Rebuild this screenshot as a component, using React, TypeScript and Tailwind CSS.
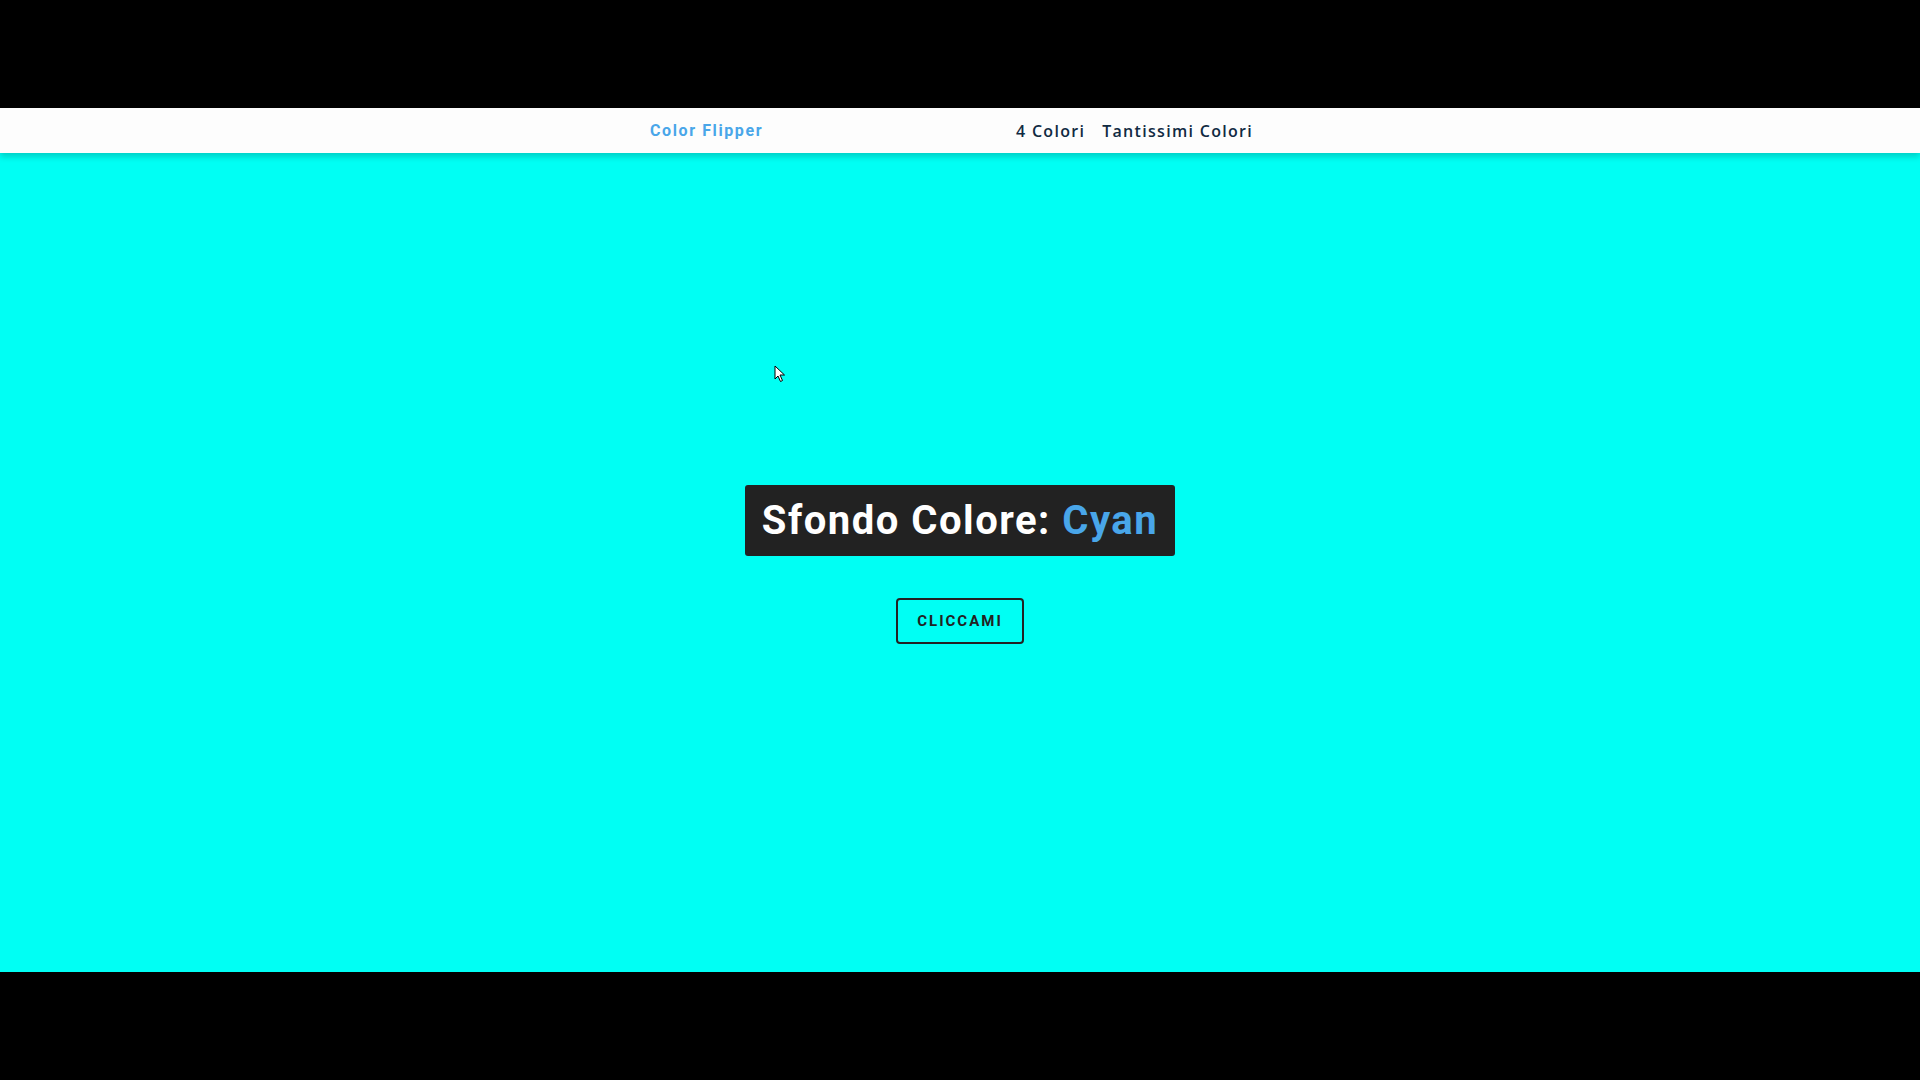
import React from 'react';

const FONT = { fontFamily: 'Roboto, "Liberation Sans", sans-serif' };

function Cursor() {
  return (
    <svg
      className="absolute left-[774px] top-[257px]"
      width="12"
      height="18"
      viewBox="0 0 12 18"
    >
      <path d="M1 1 L1 14 L4 11 L6.5 16.5 L8.5 15.5 L6 10 L10.5 10 Z" fill="#fff" stroke="#000" strokeWidth="1" />
    </svg>
  );
}

export default function App() {
  return (
    <div className="w-[1920px] h-[1080px] bg-black flex flex-col" style={FONT}>
      <div className="h-[108px] shrink-0" />
      <div className="relative flex-1 flex flex-col bg-[#00fff4]">
        {/* Navbar */}
        <nav className="h-[45px] bg-[#fdfdfd] shadow-[0_4px_6px_rgba(0,0,0,0.18)] flex items-center">
          <div className="w-[620px] mx-auto flex items-center justify-between">
            <h4 className="text-[16px] font-bold tracking-[1.6px] text-[#49a6e9] whitespace-nowrap">
              Color Flipper
            </h4>
            <ul className="flex gap-[17px] pr-[17px] pt-[1px] text-[16px] tracking-[1.3px] text-[#102a42] font-['Open_Sans',sans-serif] font-semibold">
              <li>4 Colori</li>
              <li>Tantissimi Colori</li>
            </ul>
          </div>
        </nav>

        {/* Main */}
        <main className="flex-1 flex flex-col items-center pt-[332px]">
          <h2 className="bg-[#222222] rounded-[3px] px-[17px] h-[71px] flex items-center text-[40px] font-bold tracking-[1.5px] text-white whitespace-nowrap">
            Sfondo Colore:&nbsp;<span className="text-[#49a6e9]">Cyan</span>
          </h2>
          <button className="mt-[42px] w-[128px] h-[46px] border-2 border-[#222222] rounded-[4px] bg-transparent text-[15px] font-bold tracking-[2px] uppercase text-[#222222]">
            Cliccami
          </button>
        </main>
        <Cursor />
      </div>
      <div className="h-[108px] shrink-0" />
    </div>
  );
}
